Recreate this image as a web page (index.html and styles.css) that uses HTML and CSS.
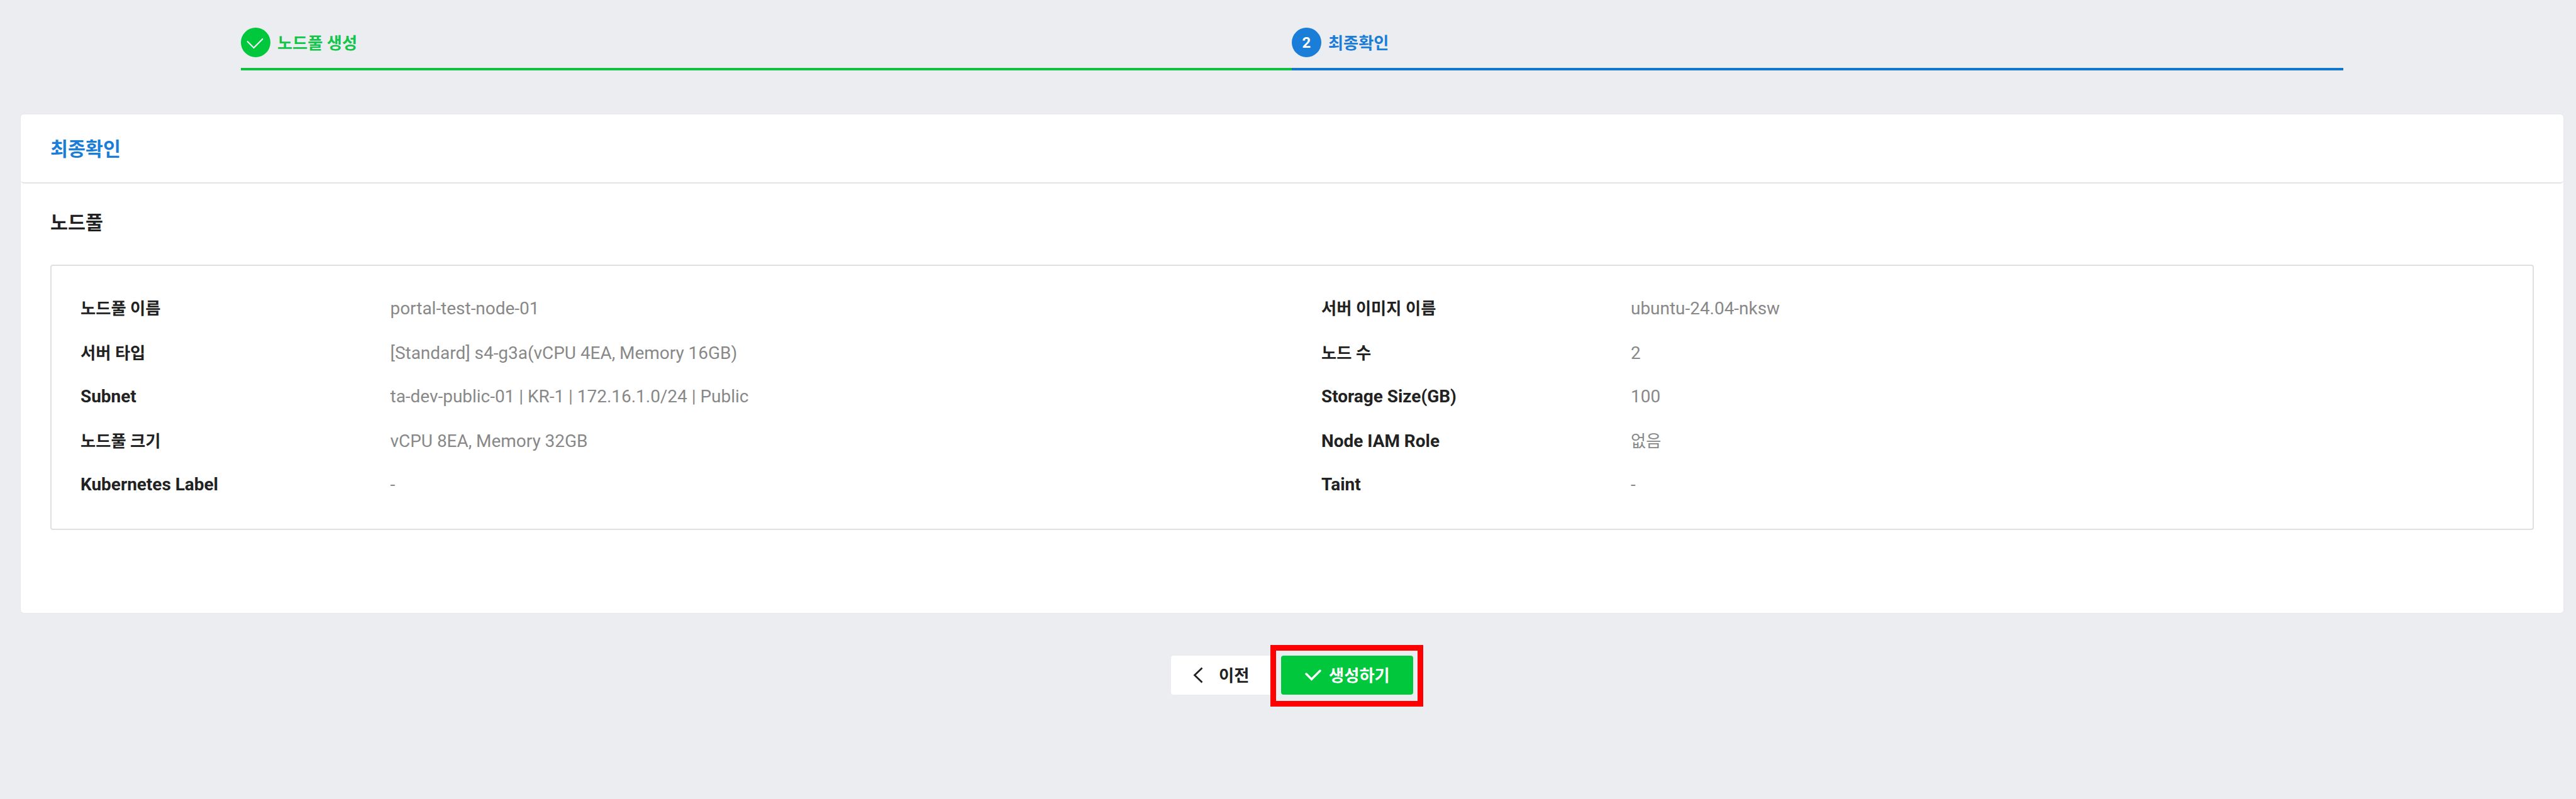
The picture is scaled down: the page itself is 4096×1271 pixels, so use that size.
FILE: index.html
```html
<!DOCTYPE html>
<html lang="ko">
<head>
<meta charset="utf-8">
<title>노드풀 생성</title>
<link rel="stylesheet" href="styles.css">
</head>
<body>
<ol class="steps">
  <li class="step step-done">
    <span class="step-mark"><svg class="step-check" viewBox="0 0 47 47"><path d="M10 21.5 20.5 32 35 17.5"/></svg></span>
    <span class="step-name">노드풀 생성</span>
  </li>
  <li class="step step-current">
    <span class="step-mark">2</span>
    <span class="step-name">최종확인</span>
  </li>
</ol>
<main class="card">
  <header class="card-head"><h1 class="card-title">최종확인</h1></header>
  <section class="card-body">
    <h2 class="section-title">노드풀</h2>
    <dl class="summary">
      <dt class="ko">노드풀 이름</dt><dd>portal-test-node-01</dd><dt class="ko">서버 이미지 이름</dt><dd>ubuntu-24.04-nksw</dd>
      <dt class="ko">서버 타입</dt><dd>[Standard] s4-g3a(vCPU 4EA, Memory 16GB)</dd><dt class="ko">노드 수</dt><dd>2</dd>
      <dt>Subnet</dt><dd>ta-dev-public-01 | KR-1 | 172.16.1.0/24 | Public</dd><dt>Storage Size(GB)</dt><dd>100</dd>
      <dt class="ko">노드풀 크기</dt><dd>vCPU 8EA, Memory 32GB</dd><dt>Node IAM Role</dt><dd class="ko">없음</dd>
      <dt>Kubernetes Label</dt><dd>-</dd><dt>Taint</dt><dd>-</dd>
    </dl>
  </section>
</main>
<div class="actions">
  <button class="btn btn-prev" type="button"><svg class="icon-prev" viewBox="0 0 16 26"><path d="M14.5 1.5 2.5 13 14.5 24.5"/></svg><span>이전</span></button>
  <div class="create">
    <button class="btn btn-create" type="button"><svg class="icon-check" viewBox="0 0 26 18"><path d="M2 7 10.5 15.5 24 2"/></svg><span>생성하기</span></button>
    <span class="highlight"></span>
  </div>
</div>
</body>
</html>
```
FILE: styles.css
```css
* { box-sizing: border-box; margin: 0; padding: 0; }

body {
  height: 1271px;
  padding: 44px 20px 0 33px;
  overflow: hidden;
  background: #ecedf1;
  color: #222;
  font-family: Roboto, "Noto Sans CJK KR", sans-serif;
  font-size: 26.2px;
}

.steps { display: flex; width: 3343px; margin-left: 350px; list-style: none; }
.step {
  display: flex;
  flex: 1;
  height: 68px;
  align-items: flex-start;
  gap: 11px;
  border-bottom: 4px solid;
  font-weight: 700;
}
.step-done { flex: 0 0 1671px; border-color: #0fc043; color: #13c64b; }
.step-current { border-color: #1276cb; color: #1a7dd7; }
.step-mark {
  display: flex;
  width: 47px;
  height: 47px;
  align-items: center;
  justify-content: center;
  border-radius: 50%;
  color: #fff;
  font-size: 24px;
  line-height: 49px;
}
.step-done .step-mark { background: #00c73c; }
.step-current .step-mark { padding-top: 2px; background: #1a7dd7; }
.step-name { line-height: 51px; }
.step-check { width: 47px; height: 47px; fill: none; stroke: #fff; stroke-width: 2; }

.card {
  height: 793px;
  margin-top: 70px;
  border-radius: 5px;
  background: #fff;
  box-shadow: 0 0 2px #dfe0e3;
}
.card-head {
  height: 110px;
  padding: 0 47px;
  border-bottom: 2px solid #e4e4e4;
  border-radius: 5px;
}
.card-title { color: #1a7dd7; font-size: 30.4px; line-height: 111px; }
.card-body { padding: 37px 47px 0; }
.section-title { height: 92px; font-size: 30.4px; line-height: 51px; }

.summary {
  display: grid;
  grid-template-columns: 492.5px 1480.5px 492px 1fr;
  grid-template-rows: 71px 69px 71px 69px 69px;
  height: 422px;
  padding: 33px 0 0 46px;
  border: 2px solid #e0e0e0;
  border-radius: 4px;
  font-size: 27.95px;
  line-height: 69px;
}
.summary dt { font-weight: 700; }
.summary dd { color: #888; }
.summary .ko { font-size: 26.3px; line-height: 71px; }

.actions { display: flex; gap: 12px; margin: 68px 0 0 1829px; }
.btn {
  display: flex;
  height: 62px;
  align-items: center;
  border: 0;
  border-radius: 4px;
  font: 700 26.3px/62px Roboto, "Noto Sans CJK KR", sans-serif;
}
.btn span { padding-top: 1px; }
.btn-prev { width: 163px; padding-left: 35px; gap: 25px; background: #fff; color: #222; }
.btn-create { width: 210px; padding-left: 38px; gap: 12px; background: #00c73c; color: #fff; }
.icon-prev { width: 16px; height: 26px; fill: none; stroke: #222; stroke-width: 2.8; }
.icon-check { width: 26px; height: 18px; fill: none; stroke: #fff; stroke-width: 3.4; stroke-linecap: round; }
.create { position: relative; }
.highlight { position: absolute; inset: -17px -16px -19px -17px; border: 9px solid #f00; }
```
